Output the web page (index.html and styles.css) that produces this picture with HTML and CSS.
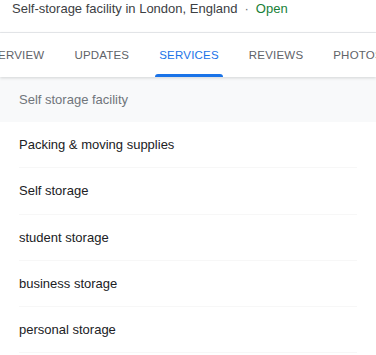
FILE: index.html
```html
<!DOCTYPE html>
<html lang="en">
<head>
    <meta charset="UTF-8">
    <meta name="viewport" content="width=device-width, initial-scale=1.0">
    <title>Services</title>
    <link rel="stylesheet" href="styles.css">
</head>
<body>
    <div class="summary">
        <span class="category">Self-storage facility in London, England</span>
        <span class="dot">·</span>
        <span class="open">Open</span>
    </div>

    <div class="tabs">
        <div class="tab-strip">
            <div class="tab">Overview</div>
            <div class="tab">Updates</div>
            <div class="tab active">Services</div>
            <div class="tab">Reviews</div>
            <div class="tab">Photos</div>
        </div>
    </div>

    <div class="services">
        <div class="services-head">Self storage facility</div>
        <div class="service">Packing &amp; moving supplies</div>
        <div class="service">Self storage</div>
        <div class="service">student storage</div>
        <div class="service">business storage</div>
        <div class="service">personal storage</div>
    </div>
</body>
</html>
```

FILE: styles.css
```css
body {
    margin: 0;
    height: 355px;
    font-family: "Liberation Sans", Arial, sans-serif;
    background: #fff;
    overflow: hidden;
}

.summary {
    height: 32px;
    padding: 0 12px;
    display: flex;
    align-items: flex-start;
    gap: 7px;
    font-size: 13px;
    line-height: 18px;
    border-bottom: 1px solid #e8eaed;
}

.category {
    color: #3c4043;
}

.dot {
    color: #70757a;
}

.open {
    color: #188038;
}

.tabs {
    height: 44px;
    overflow: hidden;
    box-shadow: 0 1px 3px rgba(60, 64, 67, 0.2);
    position: relative;
}

.tab-strip {
    display: flex;
    height: 100%;
    margin-left: -34px;
}

.tab {
    position: relative;
    padding: 0 15px;
    display: flex;
    align-items: center;
    font-size: 11.5px;
    text-transform: uppercase;
    letter-spacing: 0.2px;
    color: #5f6368;
    white-space: nowrap;
}

.tab.active {
    color: #1a73e8;
}

.tab.active::after {
    content: "";
    position: absolute;
    left: 11px;
    right: 11px;
    bottom: 0;
    height: 3px;
    background: #1a73e8;
    border-radius: 3px 3px 0 0;
}

.services-head {
    height: 45px;
    padding: 0 19px;
    display: flex;
    align-items: center;
    background: #f8f9fa;
    color: #70757a;
    font-size: 13px;
}

.service {
    height: 46.3px;
    margin: 0 19px;
    display: flex;
    align-items: center;
    font-size: 13px;
    color: #202124;
    border-bottom: 1px solid #f7f7f7;
    box-sizing: border-box;
}
```
